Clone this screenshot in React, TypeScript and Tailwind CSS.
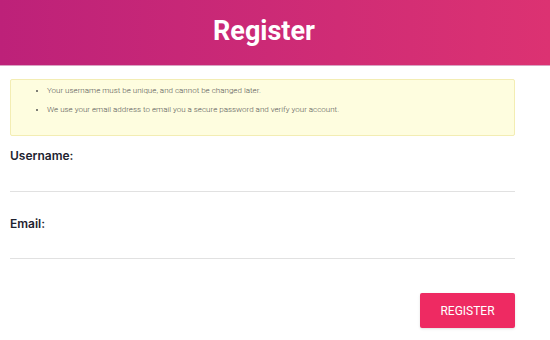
export default function App() {
  return (
    <div className="w-[550px] h-[340px] bg-white overflow-hidden" style={{ fontFamily: 'Roboto, "Liberation Sans", sans-serif' }}>
      {/* header */}
      <div className="h-[66px] bg-gradient-to-r from-[#bd2179] to-[#dc3272] border-b border-[#d9a3c2] flex items-center pr-[22px]">
        <h1 className="flex-1 text-center text-white font-bold text-[27px] leading-none pb-[2px]">Register</h1>
      </div>

      <div className="w-[505px] ml-[10px]">
        {/* notice */}
        <div className="mt-[13px] h-[57px] bg-[#fefddf] border border-[#f3edb3] rounded-[2px] pt-[5px]">
          <ul className="list-disc pl-[36px] text-[8px] font-light text-[#555] leading-[11px] space-y-[8px]">
            <li>Your username must be unique, and cannot be changed later.</li>
            <li>We use your email address to email you a secure password and verify your account.</li>
          </ul>
        </div>

        {/* fields */}
        <div className="mt-[10px]">
          <label className="block text-[12px] font-semibold text-[#1e2330] leading-[20px]" style={{ fontFamily: 'Inter, "Liberation Sans", sans-serif' }}>
            Username:
          </label>
          <div className="h-[26px] border-b border-[#e1e1e1]"></div>
        </div>
        <div className="mt-[22px]">
          <label className="block text-[12px] font-semibold text-[#1e2330] leading-[20px]" style={{ fontFamily: 'Inter, "Liberation Sans", sans-serif' }}>
            Email:
          </label>
          <div className="h-[25px] border-b border-[#e1e1e1]"></div>
        </div>

        <div className="flex justify-end mt-[34px]">
          <button className="w-[95px] h-[35px] bg-[#ee2a62] text-white text-[12px] rounded-[2px] shadow-sm">REGISTER</button>
        </div>
      </div>
    </div>
  );
}
